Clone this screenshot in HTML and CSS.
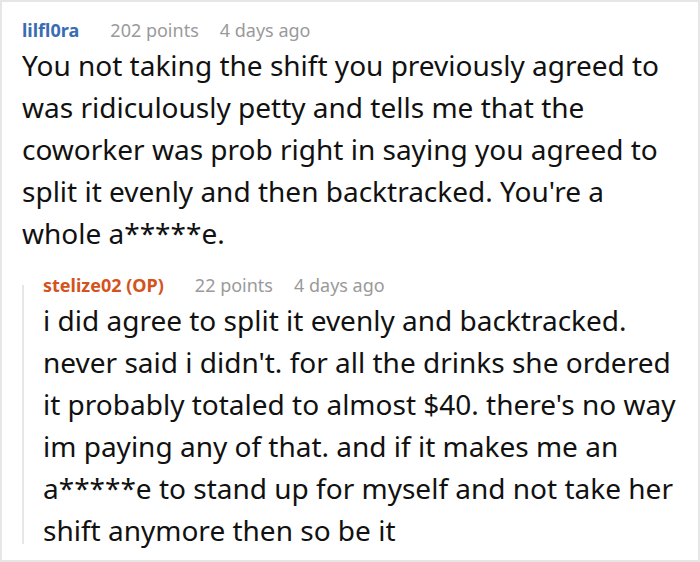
FILE: index.html
```html
<!DOCTYPE html>
<html>
<head>
<meta charset="utf-8">
<link rel="stylesheet" href="styles.css">
</head>
<body>
<div class="frame">
  <div class="comment">
    <div class="meta">
      <span class="user">lilfl0ra</span>
      <span class="points">202 points</span>
      <span class="time">4 days ago</span>
    </div>
    <p class="text">You not taking the shift you previously agreed to was ridiculously petty and tells me that the coworker was prob right in saying you agreed to split it evenly and then backtracked. You're a whole a*****e.</p>
    <div class="reply">
      <div class="meta">
        <span class="user op">stelize02 (OP)</span>
        <span class="points">22 points</span>
        <span class="time">4 days ago</span>
      </div>
      <p class="text">i did agree to split it evenly and backtracked. never said i didn't. for all the drinks she ordered it probably totaled to almost $40. there's no way im paying any of that. and if it makes me an a*****e to stand up for myself and not take her shift anymore then so be it</p>
    </div>
  </div>
</div>
</body>
</html>
```
FILE: styles.css
```css
html, body {
  margin: 0;
  padding: 0;
  background: #fff;
}
.frame {
  box-sizing: border-box;
  width: 700px;
  height: 562px;
  border: 2px solid #e6e6e6;
  overflow: hidden;
  font-family: "Noto Sans", sans-serif;
  color: #111;
}
.comment {
  padding: 16px 20px 0 20px;
}
.meta {
  display: flex;
  align-items: baseline;
  font-size: 18px;
  line-height: 24px;
  color: #9a9a9a;
}
.user {
  font-weight: bold;
  color: #3a6cb4;
  margin-right: 31px;
}
.user.op {
  color: #d4531c;
}
.points {
  margin-right: 21px;
}
.text {
  margin: 2px 0 0 0;
  font-size: 28px;
  line-height: 42px;
}
.reply {
  position: relative;
  margin-top: 19px;
  padding-left: 21px;
}
.reply .text {
  margin-top: 2px;
}
.reply::before {
  content: "";
  position: absolute;
  left: 0;
  top: 12px;
  bottom: 7px;
  width: 2px;
  background: #e6e6e6;
}
```
